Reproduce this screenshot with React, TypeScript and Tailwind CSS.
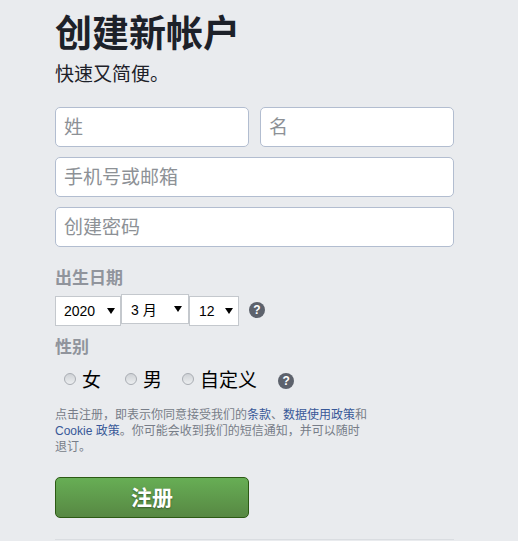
const cjk = "font-['Liberation_Sans','Noto_Sans_CJK_SC',sans-serif]";

function TextInput({ placeholder, className }: { placeholder: string; className: string }) {
  return (
    <input
      placeholder={placeholder}
      className={`h-10 rounded-[5px] border border-[#b2bdd0] bg-white px-[8px] pt-[2px] text-[19px] text-black outline-none placeholder:text-[#8d9196] ${className}`}
    />
  );
}

function Select({ label, className, arrow }: { label: string; className: string; arrow?: string }) {
  return (
    <div className={`flex items-center justify-between border border-[#c4c8cd] bg-white text-[14px] text-black ${className}`}>
      <span>{label}</span>
      <span className={`h-0 w-0 border-x-[4px] border-t-[6px] border-x-transparent border-t-black ${arrow ?? ""}`} />
    </div>
  );
}

function Help({ className }: { className?: string }) {
  return (
    <span className={`flex h-4 w-4 items-center justify-center rounded-full bg-[#5d626c] text-[12px] font-bold leading-none text-white ${className ?? ""}`}>
      ?
    </span>
  );
}

function Radio({ label, className }: { label: string; className?: string }) {
  return (
    <label className={`flex items-center ${className ?? ""}`}>
      <span className="mb-[5px] h-[12px] w-[12px] rounded-full border border-[#a9adb3] bg-gradient-to-b from-[#cfd2d6] to-[#eceef0]" />
      <span className="ml-[6px] text-[19px] leading-6 text-black">{label}</span>
    </label>
  );
}

export default function App() {
  return (
    <div className={`h-[541px] w-[518px] overflow-hidden bg-[#e9ebee] pl-[55px] pt-[13px] ${cjk}`}>
      <h1 className="text-[37px] font-bold leading-[43px] text-[#1d2129]">创建新帐户</h1>
      <p className="mt-[7px] text-[19px] leading-[24px] text-[#1d2129]">快速又简便。</p>

      <div className="mt-[20px] flex w-[399px] flex-col gap-[10px]">
        <div className="flex gap-[11px]">
          <TextInput placeholder="姓" className="w-[194px]" />
          <TextInput placeholder="名" className="w-[194px]" />
        </div>
        <TextInput placeholder="手机号或邮箱" className="w-[399px]" />
        <TextInput placeholder="创建密码" className="w-[399px]" />
      </div>

      <h2 className="mt-[21px] text-[17px] font-bold leading-[22px] text-[#90949c]">出生日期</h2>
      <div className="mt-[4px] flex items-start">
        <Select label="2020" className="mt-[2px] h-[30px] w-[66px] pl-[8px] pr-[5px]" />
        <Select label="3 月" className="h-[30px] w-[68px] pl-[9px] pr-[6px] pt-[3px]" arrow="mb-[4px]" />
        <Select label="12" className="mt-[2px] h-[30px] w-[50px] pl-[9px] pr-[5px]" />
        <Help className="ml-[10px] mt-[8px]" />
      </div>

      <h2 className="mt-[11px] text-[17px] font-bold leading-[22px] text-[#90949c]">性别</h2>
      <div className="mt-[10px] flex items-center pl-[9px]">
        <Radio label="女" />
        <Radio label="男" className="ml-[24px]" />
        <Radio label="自定义" className="ml-[20px]" />
        <Help className="ml-[21px]" />
      </div>

      <p className="mt-[14px] w-[315px] text-[12px] leading-[16px] text-[#777d88]">
        点击注册，即表示你同意接受我们的<a className="text-[#385898]">条款</a>、<a className="text-[#385898]">数据使用政策</a>和<a className="text-[#385898]">Cookie 政策</a>。你可能会收到我们的短信通知，并可以随时退订。
      </p>

      <button className="mt-[22px] flex h-[41px] w-[194px] items-center justify-center rounded-[5px] border border-[#2c5a14] bg-gradient-to-b from-[#67ae55] to-[#578843] text-[21px] font-bold text-white [text-shadow:0_1px_2px_rgba(0,0,0,0.4)]">
        注册
      </button>

      <div className="mt-[21px] h-px w-[399px] bg-[#dadde1]" />
    </div>
  );
}
